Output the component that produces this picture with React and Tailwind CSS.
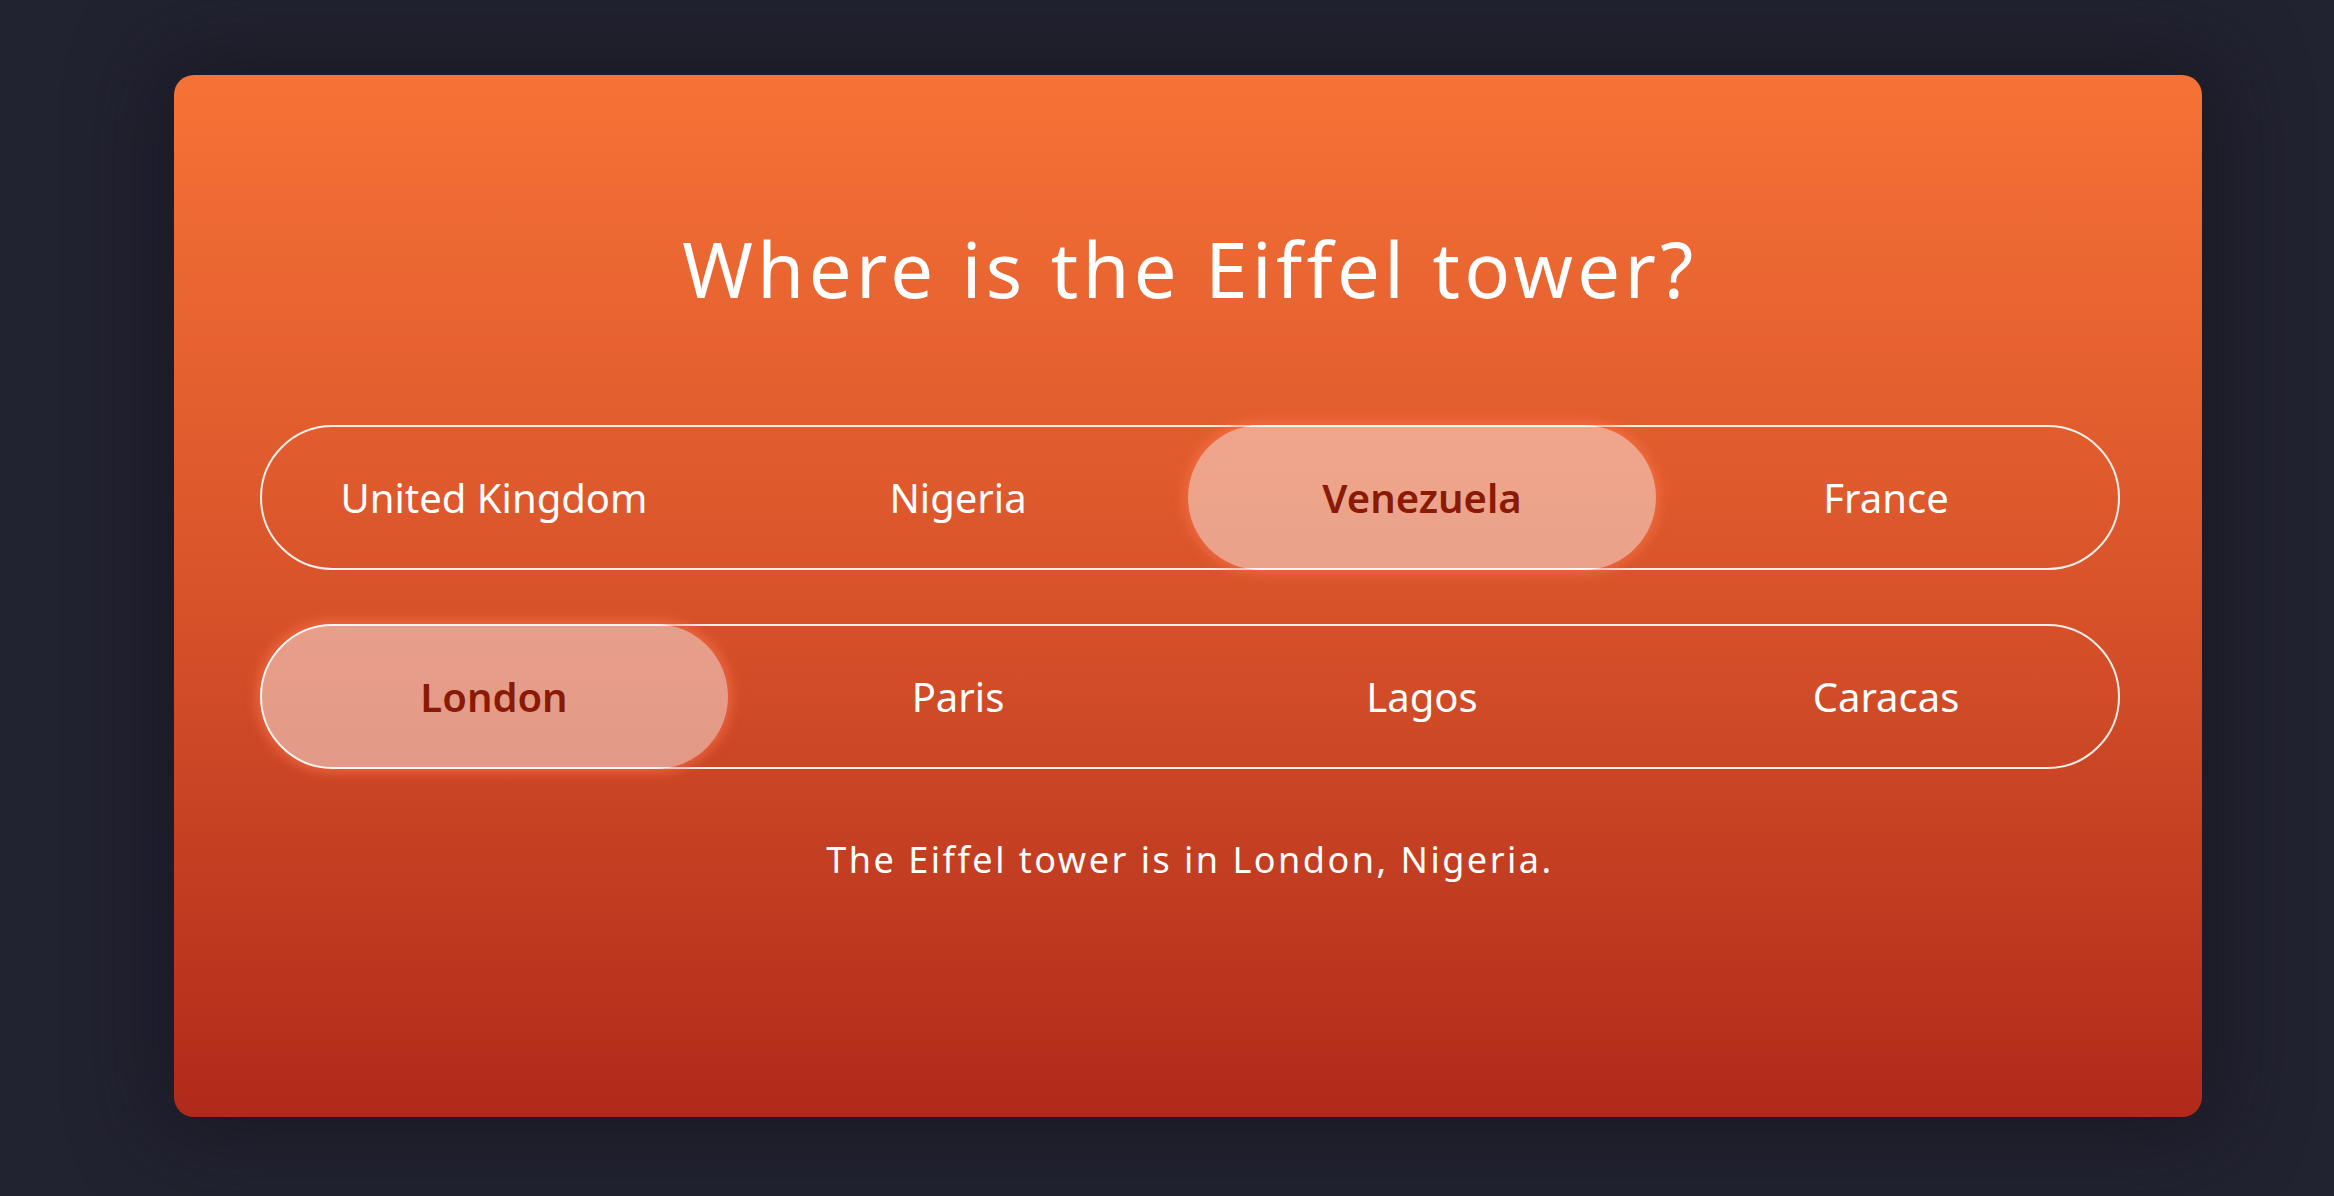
import React from 'react';

const rows = [
    { options: ['United Kingdom', 'Nigeria', 'Venezuela', 'France'], selected: 2 },
    { options: ['London', 'Paris', 'Lagos', 'Caracas'], selected: 0 },
];

const OptionRow = ({ options, selected }) => (
    <div className="grid grid-cols-4 h-[145px] rounded-full border-2 border-white/90">
        {options.map((opt, i) =>
            i === selected ? (
                <div
                    key={opt}
                    className="-m-[2px] flex items-center justify-center rounded-full bg-white/45 text-[#8a1a06] font-[560] shadow-[0_0_12px_4px_rgba(255,120,80,0.55)]"
                >
                    {opt}
                </div>
            ) : (
                <div key={opt} className="flex items-center justify-center text-white">
                    {opt}
                </div>
            )
        )}
    </div>
);

export default function App() {
    return (
        <div
            className="min-h-screen w-full bg-[#222330] pl-[174px] pr-[132px] pt-[75px] pb-[79px]"
            style={{ fontFamily: '"Noto Sans", "Open Sans", sans-serif' }}
        >
            <div className="h-[1042px] rounded-[20px] bg-gradient-to-b from-[#f67236] via-[#d8532a] to-[#b0291a] pl-[86px] pr-[82px] pt-[60px] shadow-[0_0_80px_20px_rgba(20,20,30,0.6)]">
                <h1 className="text-center text-white text-[76px] leading-[1.2] tracking-[4.4px] mt-[88px]">
                    Where is the Eiffel tower?
                </h1>
                <div className="mt-[111px] flex flex-col gap-[54px] text-[40px]">
                    {rows.map((row, idx) => (
                        <OptionRow key={idx} options={row.options} selected={row.selected} />
                    ))}
                </div>
                <p className="mt-[64px] text-center text-white text-[36px] tracking-[2.5px]">
                    The Eiffel tower is in London, Nigeria.
                </p>
            </div>
        </div>
    );
}
